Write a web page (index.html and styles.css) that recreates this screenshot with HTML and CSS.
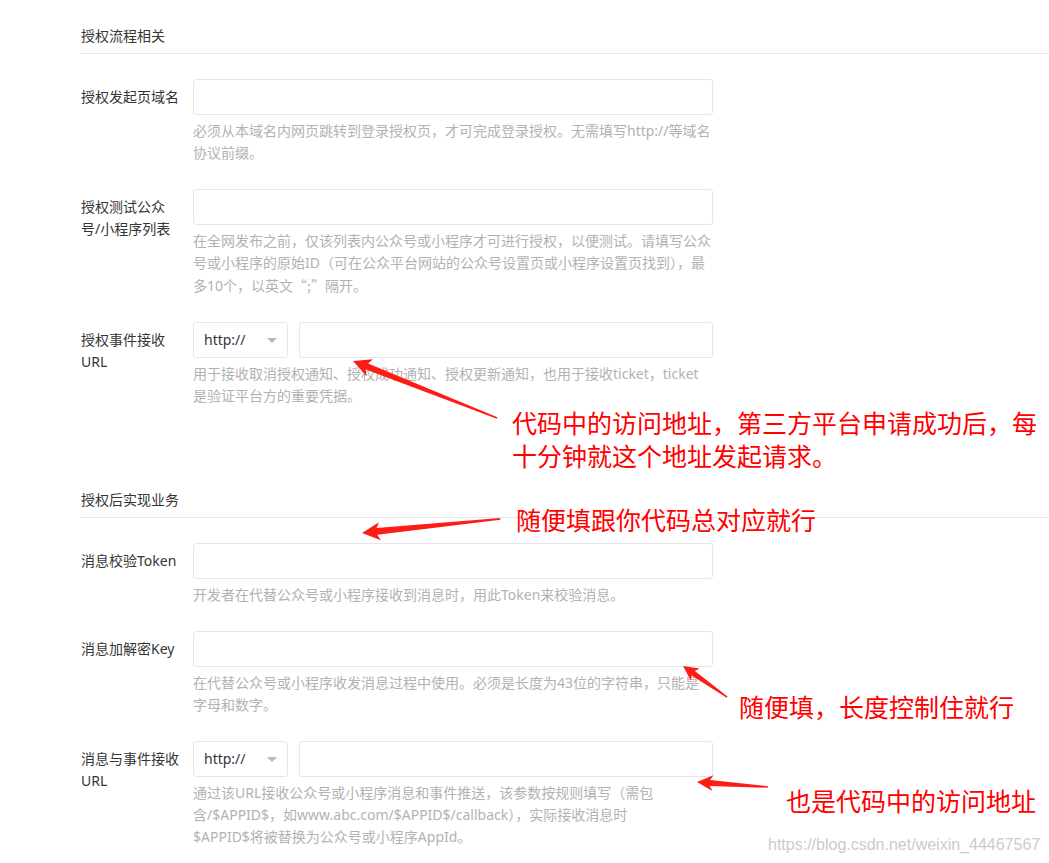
FILE: index.html
```html
<!DOCTYPE html>
<html lang="zh-CN">
<head>
    <meta charset="UTF-8">
    <meta name="viewport" content="width=device-width, initial-scale=1.0">
    <title>授权流程配置</title>
    <link rel="stylesheet" href="styles.css">
</head>
<body>

    <div class="page">

        <!-- 授权流程相关 -->
        <div class="section">
            <div class="section-title">授权流程相关</div>

            <div class="form-row">
                <div class="form-label">授权发起页域名</div>
                <div class="form-field">
                    <div class="input"></div>
                    <div class="hint">必须从本域名内网页跳转到登录授权页，才可完成登录授权。无需填写http://等域名<br>协议前缀。</div>
                </div>
            </div>

            <div class="form-row">
                <div class="form-label">授权测试公众号/小程序列表</div>
                <div class="form-field">
                    <div class="input"></div>
                    <div class="hint">在全网发布之前，仅该列表内公众号或小程序才可进行授权，以便测试。请填写公众<br>号或小程序的原始ID（可在公众平台网站的公众号设置页或小程序设置页找到），最<br>多10个，以英文<span class="cjk">“;”</span>隔开。</div>
                </div>
            </div>

            <div class="form-row">
                <div class="form-label">授权事件接收URL</div>
                <div class="form-field">
                    <div class="url-group">
                        <div class="select">http://<span class="caret"></span></div>
                        <div class="input"></div>
                    </div>
                    <div class="hint">用于接收取消授权通知、授权成功通知、授权更新通知，也用于接收ticket，ticket<br>是验证平台方的重要凭据。</div>
                </div>
            </div>
        </div>

        <!-- 授权后实现业务 -->
        <div class="section second">
            <div class="section-title">授权后实现业务</div>

            <div class="form-row">
                <div class="form-label">消息校验Token</div>
                <div class="form-field">
                    <div class="input"></div>
                    <div class="hint">开发者在代替公众号或小程序接收到消息时，用此Token来校验消息。</div>
                </div>
            </div>

            <div class="form-row">
                <div class="form-label">消息加解密Key</div>
                <div class="form-field">
                    <div class="input"></div>
                    <div class="hint">在代替公众号或小程序收发消息过程中使用。必须是长度为43位的字符串，只能是<br>字母和数字。</div>
                </div>
            </div>

            <div class="form-row">
                <div class="form-label">消息与事件接收URL</div>
                <div class="form-field">
                    <div class="url-group">
                        <div class="select">http://<span class="caret"></span></div>
                        <div class="input"></div>
                    </div>
                    <div class="hint">通过该URL接收公众号或小程序消息和事件推送，该参数按规则填写（需包<br>含/$APPID$，如www.abc.com/$APPID$/callback），实际接收消息时<br>$APPID$将被替换为公众号或小程序AppId。</div>
                </div>
            </div>
        </div>
    </div>

    <!-- annotations -->
    <svg class="arrows" width="1049" height="863" viewBox="0 0 1049 863">
        <polygon transform="translate(353,361) rotate(21.6)" points="0,0 18,-9 15,-3.2 155,-0.8 155,0.8 15,3.2 18,9"/>
        <polygon transform="translate(362,533) rotate(-5.8)" points="0,0 18,-9 15,-3.4 139,-0.9 139,0.9 15,3.4 18,9"/>
        <polygon transform="translate(683,666) rotate(35.2)" points="0,0 15,-7.5 12.5,-2.8 54,-0.7 54,0.7 12.5,2.8 15,7.5"/>
        <polygon transform="translate(697,782) rotate(4)" points="0,0 16,-8 13,-3 71,-0.8 71,0.8 13,3 16,8"/>
    </svg>

    <div class="note note-1">代码中的访问地址，第三方平台申请成功后，每<br>十分钟就这个地址发起请求。</div>
    <div class="note note-2">随便填跟你代码总对应就行</div>
    <div class="note note-3">随便填，长度控制住就行</div>
    <div class="note note-4">也是代码中的访问地址</div>

    <div class="watermark">https://blog.csdn.net/weixin_44467567</div>

</body>
</html>
```

FILE: styles.css
```css
* {
    margin: 0;
    padding: 0;
    box-sizing: border-box;
}

html, body {
    height: 100%;
    overflow: hidden;
}

body {
    position: relative;
    font-family: "Noto Sans", "Noto Sans CJK SC", sans-serif;
    font-size: 14px;
    line-height: 22px;
    color: #353535;
    background-color: #fff;
}

.page {
    padding: 25px 0 0 81px;
}

/* margin collapses with the 25px of the last row above */
.section.second {
    margin-top: 82px;
}

/* section header with divider */
.section-title {
    padding-bottom: 6px;
    border-bottom: 1px solid #e7e7eb;
    margin-bottom: 25px;
}

.form-row {
    display: flex;
    margin-bottom: 25px;
}

.form-label {
    width: 100px;
    margin-right: 12px;
    padding-top: 7px;
}

.form-field {
    width: 520px;
}

.input {
    flex: 1;
    height: 36px;
    border: 1px solid #e4e8eb;
    border-radius: 3px;
    background-color: #fff;
}

.url-group {
    display: flex;
    gap: 11px;
}

.select {
    position: relative;
    width: 95px;
    height: 36px;
    padding: 6px 10px;
    border: 1px solid #e4e8eb;
    border-radius: 3px;
    color: #353535;
}

.caret {
    position: absolute;
    top: 15px;
    right: 10px;
    width: 0;
    height: 0;
    border-left: 5px solid transparent;
    border-right: 5px solid transparent;
    border-top: 5px solid #b8b8b8;
}

.hint {
    width: 540px;
    margin-top: 5px;
    color: #b2b2b2;
}

.cjk {
    font-family: "Noto Sans CJK SC", sans-serif;
}

/* red screenshot notes */
.arrows {
    position: absolute;
    top: 0;
    left: 0;
    pointer-events: none;
}

.arrows polygon {
    fill: #fe1d15;
}

.note {
    position: absolute;
    font-family: "Noto Sans CJK SC", sans-serif;
    font-size: 25px;
    line-height: 33px;
    color: #ff0000;
    white-space: nowrap;
}

.note-1 { top: 406px; left: 512px; }
.note-2 { top: 503px; left: 516px; }
.note-3 { top: 690px; left: 739px; }
.note-4 { top: 784px; left: 786px; }

.watermark {
    position: absolute;
    top: 835px;
    left: 768px;
    font-family: "Liberation Sans", Arial, sans-serif;
    font-size: 16px;
    line-height: 20px;
    color: #cbcbcb;
    white-space: nowrap;
}
```
